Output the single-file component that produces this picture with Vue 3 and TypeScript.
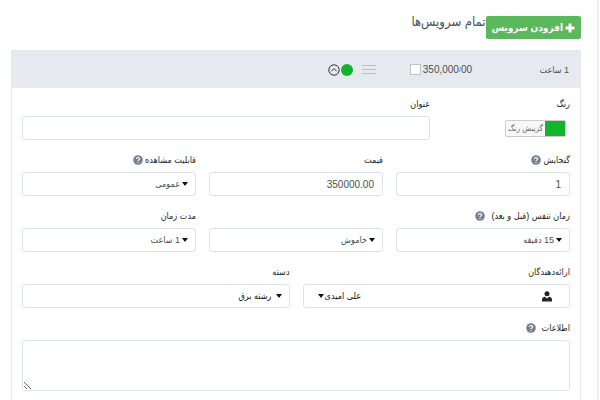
<script setup lang="ts">
import { ref } from 'vue'

const color = ref('#12b52a')
const enabled = ref(false)
const title = ref('')
const capacity = ref('1')
const price = ref('350000.00')
const visibility = ref('عمومی')
const paddingBefore = ref('15 دقیقه')
const paddingAfter = ref('خاموش')
const duration = ref('1 ساعت')
const provider = ref('علی امیدی')
const category = ref('رشته برق')
const info = ref('')
</script>

<template>
  <main class="page" dir="rtl" lang="fa">
    <header class="top">
      <button class="add" type="button">
        <svg class="plus" viewBox="0 0 10 10" aria-hidden="true"><path d="M3.6 .5h2.8v3.1h3.1v2.8H6.4v3.1H3.6V6.4H.5V3.6h3.1z" /></svg>
        <span>افزودن سرویس</span>
      </button>
      <h1>تمام سرویس‌ها</h1>
    </header>

    <section class="card">
      <div class="summary">
        <span class="time">1 ساعت</span>
        <label class="cost">
          <span dir="ltr">350,000<span class="slash">/</span>00</span>
          <input v-model="enabled" type="checkbox" />
        </label>
        <svg class="bars" viewBox="0 0 14 12" aria-hidden="true"><path d="M0 1.5h14M0 5.5h14M0 9.5h14" /></svg>
        <span class="state">
          <span class="dot"></span>
          <button class="toggle" type="button" aria-label="بستن">
            <svg viewBox="0 0 12 12" aria-hidden="true"><circle cx="6" cy="6" r="5.2" /><path d="M3.3 7.3 6 4.6l2.7 2.7" /></svg>
          </button>
        </span>
      </div>

      <form class="body" @submit.prevent>
        <div class="row lead">
          <div class="field">
            <label for="color">رنگ</label>
            <button id="color" class="picker" type="button">
              <span class="swatch" :style="{ background: color }"></span>
              <span class="pick">گزینش رنگ</span>
            </button>
          </div>
          <div class="field">
            <label for="title">عنوان</label>
            <input id="title" v-model="title" class="control" type="text" />
          </div>
        </div>

        <div class="row thirds">
          <div class="field">
            <label for="capacity">گنجایش
              <svg class="help" viewBox="0 0 10 10" aria-hidden="true"><circle cx="5" cy="5" r="4.8" /><path d="M3.4 3.9C3.5 2 6.6 2.1 6.6 3.8 6.6 4.9 5 4.9 5 6M5 7v1.1" /></svg>
            </label>
            <input id="capacity" v-model="capacity" class="control" type="text" />
          </div>
          <div class="field">
            <label for="price">قیمت</label>
            <input id="price" v-model="price" class="control" type="text" />
          </div>
          <div class="field">
            <label for="visibility">قابلیت مشاهده
              <svg class="help" viewBox="0 0 10 10" aria-hidden="true"><circle cx="5" cy="5" r="4.8" /><path d="M3.4 3.9C3.5 2 6.6 2.1 6.6 3.8 6.6 4.9 5 4.9 5 6M5 7v1.1" /></svg>
            </label>
            <div class="select">
              <select id="visibility" v-model="visibility" class="control"><option>عمومی</option></select>
              <span class="caret"></span>
            </div>
          </div>
        </div>

        <div class="row thirds">
          <div class="field">
            <label class="spaced" for="before">زمان تنفس (قبل و بعد)
              <svg class="help" viewBox="0 0 10 10" aria-hidden="true"><circle cx="5" cy="5" r="4.8" /><path d="M3.4 3.9C3.5 2 6.6 2.1 6.6 3.8 6.6 4.9 5 4.9 5 6M5 7v1.1" /></svg>
            </label>
            <div class="select">
              <select id="before" v-model="paddingBefore" class="control"><option>15 دقیقه</option></select>
              <span class="caret"></span>
            </div>
          </div>
          <div class="field end">
            <div class="select">
              <select v-model="paddingAfter" class="control" aria-label="بعد"><option>خاموش</option></select>
              <span class="caret"></span>
            </div>
          </div>
          <div class="field">
            <label for="duration">مدت زمان</label>
            <div class="select">
              <select id="duration" v-model="duration" class="control"><option>1 ساعت</option></select>
              <span class="caret"></span>
            </div>
          </div>
        </div>

        <div class="row halves">
          <div class="field">
            <label for="provider">ارائه‌دهندگان</label>
            <div class="select people">
              <select id="provider" v-model="provider" class="control"><option>علی امیدی</option></select>
              <svg class="person" viewBox="0 0 10 11" aria-hidden="true"><circle cx="5" cy="2.8" r="2.5" /><path d="M0 10.4V8.6C0 6.8 1.4 6 3 5.8L5 7.4 7 5.8c1.6.2 3 1 3 2.8v1.8z" /></svg>
              <span class="caret"></span>
            </div>
          </div>
          <div class="field">
            <label for="category">دسته</label>
            <div class="select dark">
              <select id="category" v-model="category" class="control"><option>رشته برق</option></select>
              <span class="caret"></span>
            </div>
          </div>
        </div>

        <div class="field">
          <label class="spaced" for="info">اطلاعات
            <svg class="help" viewBox="0 0 10 10" aria-hidden="true"><circle cx="5" cy="5" r="4.8" /><path d="M3.4 3.9C3.5 2 6.6 2.1 6.6 3.8 6.6 4.9 5 4.9 5 6M5 7v1.1" /></svg>
          </label>
          <textarea id="info" v-model="info" class="control" rows="3"></textarea>
        </div>
      </form>
    </section>
  </main>
</template>

<style>
body {
  background: #fff;
}
</style>

<style scoped>
* {
  box-sizing: border-box;
}
.page {
  min-height: 100vh;
  margin-right: 1px;
  padding: 16px 16px 0 11px;
  border-right: 2px solid #eceff4;
  font-family: "Liberation Sans", "DejaVu Sans Condensed", "DejaVu Sans", sans-serif;
  font-size: 10px;
  color: #4b4f58;
}
button,
input,
select,
textarea {
  margin: 0;
  font: inherit;
  color: inherit;
}
.top {
  display: flex;
  align-items: flex-start;
  height: 34px;
}
.add {
  display: flex;
  align-items: center;
  justify-content: center;
  gap: 2px;
  height: 23px;
  padding: 0 6px;
  border: 0;
  border-radius: 2px;
  background: #5cb85c;
  color: #fff;
  font-size: 10px;
  font-weight: bold;
  white-space: nowrap;
}
.plus {
  width: 10px;
  height: 10px;
  fill: currentColor;
}
h1 {
  margin: 0;
  font-size: 13px;
  font-weight: normal;
  line-height: 12px;
}
.card {
  border: 1px solid #e5e9ef;
  border-bottom: 0;
  border-radius: 2px 2px 0 0;
}
.summary {
  display: flex;
  align-items: center;
  height: 37px;
  padding: 0 11px;
  background: #e6eaef;
}
.time {
  flex: 0 0 97px;
  font-size: 9px;
}
.cost {
  display: flex;
  align-items: center;
  gap: 2px;
  font-size: 10px;
}
.slash {
  font-size: 7px;
  vertical-align: 1px;
}
.cost input {
  appearance: none;
  width: 11px;
  height: 11px;
  border: 1px solid #bfc3c9;
  background: #fff;
}
.bars {
  width: 14px;
  height: 12px;
  margin-right: 34px;
  fill: none;
  stroke: #b9c0cc;
  stroke-width: 1;
}
.state {
  display: flex;
  align-items: center;
  gap: 1px;
  margin-right: 9px;
}
.dot {
  width: 12px;
  height: 12px;
  border-radius: 50%;
  background: #12b52a;
}
.toggle {
  display: flex;
  padding: 0;
  border: 0;
  background: none;
}
.toggle svg {
  width: 12px;
  height: 12px;
  fill: none;
  stroke: #333;
  stroke-width: 1;
}
.body {
  display: flex;
  flex-direction: column;
  gap: 12px;
  padding: 8px 10px 10px;
}
.row {
  display: grid;
  gap: 13px;
}
.lead {
  grid-template-columns: 127px 1fr;
}
.thirds {
  grid-template-columns: repeat(3, 1fr);
}
.halves {
  grid-template-columns: repeat(2, 1fr);
}
.field {
  display: flex;
  flex-direction: column;
  align-items: stretch;
  min-width: 0;
}
.end {
  justify-content: flex-end;
}
label {
  white-space: nowrap;
}
.field > label {
  display: flex;
  align-items: center;
  gap: 2px;
  height: 20px;
  padding-bottom: 4px;
  font-size: 9px;
  color: #1c1f26;
}
.field > .spaced {
  gap: 6px;
}
.help {
  width: 10px;
  height: 10px;
}
.help circle {
  fill: #76808f;
}
.help path {
  fill: none;
  stroke: #fff;
  stroke-width: 1.2;
}
.control {
  width: 100%;
  height: 24px;
  padding: 0 8px;
  border: 1px solid #dfe4eb;
  border-radius: 3px;
  background: #fff;
  outline: 0;
}
textarea.control {
  display: block;
  height: 51px;
  padding: 4px 8px;
  resize: vertical;
}
.select {
  display: grid;
  align-items: center;
}
.select > * {
  grid-area: 1 / 1;
}
select.control {
  appearance: none;
  padding: 0 15px;
  font-size: 9px;
}
.caret {
  width: 6px;
  margin-right: 8px;
  border: 3px solid transparent;
  border-top: 4px solid #111;
  border-bottom: 0;
  pointer-events: none;
}
.dark select.control,
.people select.control {
  color: #111;
}
.dark select.control {
  padding-right: 17px;
}
.people select.control {
  padding-right: 208px;
}
.people .caret {
  margin-right: 246px;
}
.person {
  width: 10px;
  height: 11px;
  margin-right: 18px;
  fill: #22252c;
  pointer-events: none;
}
.picker {
  display: flex;
  align-self: flex-start;
  height: 17px;
  margin: 4px 4px 3px 0;
  padding: 0;
  border: 1px solid #ccc;
  border-radius: 2px;
  background: #f7f7f7;
  color: #666;
}
.swatch {
  width: 20px;
  align-self: stretch;
}
.pick {
  align-self: center;
  padding: 0 2px;
  font-size: 8px;
  line-height: 14px;
  white-space: nowrap;
}
</style>
